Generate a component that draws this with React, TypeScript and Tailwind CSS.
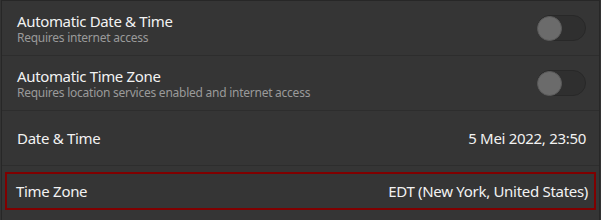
import React from "react";

function Toggle() {
  return (
    <div className="w-[49px] h-[26px] rounded-full bg-[#2f2f2f] border border-[#282828] flex items-center">
      <div className="w-[25px] h-[25px] rounded-full bg-[#6b6b6b] border border-[#5a5a5a] -ml-px" />
    </div>
  );
}

export default function App() {
  const font = { fontFamily: '"Noto Sans", "Open Sans", sans-serif' };
  return (
    <div className="w-[601px] h-[220px] bg-[#333333] overflow-hidden pl-px" style={font}>
      <div className="h-full border-l border-t border-r border-[#272727] mr-px bg-[#353535]">
        <div className="h-[55px] border-b border-[#2d2d2d] flex items-center justify-between pl-[15px] pr-[13px]">
          <div className="flex flex-col">
            <div className="text-[15px] leading-[19px] text-[#f2f2f2] tracking-[-0.35px]">Automatic Date &amp; Time</div>
            <div className="text-[12px] leading-[14px] text-[#9a9a9a] tracking-[-0.25px]">Requires internet access</div>
          </div>
          <Toggle />
        </div>
        <div className="h-[55px] border-b border-[#2d2d2d] flex items-center justify-between pl-[15px] pr-[13px]">
          <div className="flex flex-col">
            <div className="text-[15px] leading-[19px] text-[#f2f2f2] tracking-[-0.35px]">Automatic Time Zone</div>
            <div className="text-[12px] leading-[14px] text-[#9a9a9a] tracking-[-0.25px]">Requires location services enabled and internet access</div>
          </div>
          <Toggle />
        </div>
        <div className="h-[55px] border-b border-[#2d2d2d] flex items-center justify-between pl-[15px] pr-[13px]">
          <div className="text-[15px] text-[#f2f2f2] tracking-[-0.3px]">Date &amp; Time</div>
          <div className="text-[15px] text-[#f2f2f2] tracking-[-0.3px]">5 Mei 2022, 23:50</div>
        </div>
        <div className="pt-[6px] px-[3px]">
          <div className="h-[38px] border-2 border-[#800000] flex items-center justify-between pl-[9px] pr-[6px]">
            <div className="text-[15px] text-[#f2f2f2] tracking-[-0.3px]">Time Zone</div>
            <div className="text-[15px] text-[#f2f2f2] tracking-[-0.3px]">EDT (New York, United States)</div>
          </div>
        </div>
      </div>
    </div>
  );
}
